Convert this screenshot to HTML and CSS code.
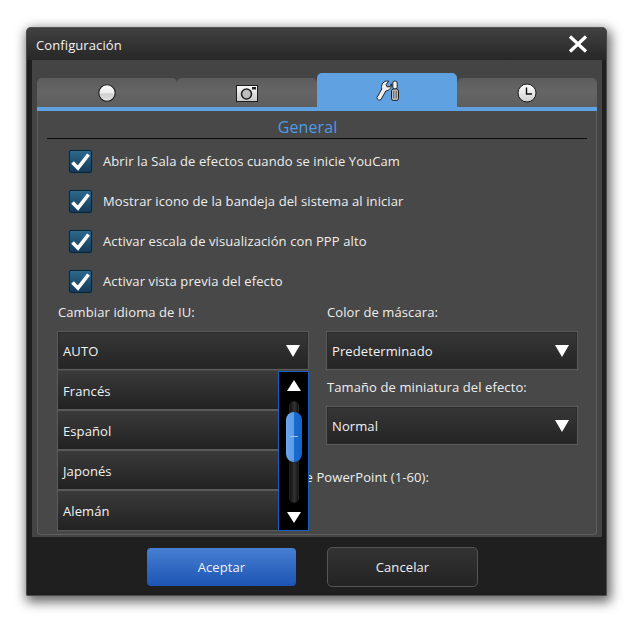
FILE: index.html
```html
<!DOCTYPE html>
<html lang="es">
<head>
<meta charset="utf-8">
<title>Configuración</title>
<link rel="stylesheet" href="styles.css">
</head>
<body>
<div class="window">
  <header class="titlebar">
    <span class="title">Configuración</span>
    <svg class="close" width="20" height="20" viewBox="0 0 20 20"><path d="M2 2.500L18 17.500M18 2.500L2 17.500" stroke="#fff" stroke-width="3.200" fill="none"/></svg>
  </header>
  <main class="panel">
    <nav class="tabs">
      <div class="tab">
        <svg width="20" height="20" viewBox="0 0 20 20"><defs><linearGradient id="g1" x1="0" y1="0" x2="0" y2="1"><stop offset="0" stop-color="#fff"/><stop offset=".5" stop-color="#ececec"/><stop offset=".55" stop-color="#cfcfcf"/><stop offset="1" stop-color="#e4e4e4"/></linearGradient></defs><circle cx="10" cy="10" r="8.200" fill="url(#g1)" stroke="#1c1c1c" stroke-width="1.100"/></svg>
      </div>
      <div class="tab">
        <svg width="24" height="20" viewBox="0 0 24 20"><defs><linearGradient id="g2" x1="0" y1="0" x2="0" y2="1"><stop offset="0" stop-color="#fafafa"/><stop offset="1" stop-color="#c8c8c8"/></linearGradient></defs><rect x="1.500" y="2.500" width="21" height="16" fill="url(#g2)" stroke="#1c1c1c"/><circle cx="11.500" cy="11" r="5" fill="#bdbdbd" stroke="#222" stroke-width="1.600"/><rect x="17" y="4" width="4" height="2.500" fill="#222"/></svg>
      </div>
      <div class="tab tab-active">
        <svg width="23" height="21" viewBox="0 0 23 21"><path d="M1 17.500L5.800 9C4.800 5.500 6.500 1.800 10.500 1L12.800 1.200L10 4.500L11.300 7L14.300 6.500L15.300 3.800C16 7.500 13.500 10.500 9.800 11L5 19.500C3.800 20.800 0.500 19.800 1 17.500Z" fill="#efefef" stroke="#222" stroke-width="1" stroke-linejoin="round"/><rect x="16.800" y="1" width="4.400" height="8" rx="2" fill="#f4f4f4" stroke="#222"/><rect x="15.500" y="9" width="7" height="11.500" rx="2" fill="#bcbcbc" stroke="#222"/><path d="M17.800 11V18.500M20.200 11V18.500" stroke="#555"/></svg>
      </div>
      <div class="tab">
        <svg width="20" height="20" viewBox="0 0 20 20"><defs><linearGradient id="g3" x1="0" y1="0" x2="0" y2="1"><stop offset="0" stop-color="#fff"/><stop offset="1" stop-color="#cfcfcf"/></linearGradient></defs><circle cx="10" cy="10" r="9" fill="url(#g3)" stroke="#1c1c1c"/><path d="M9.500 4.500V11H15" stroke="#111" stroke-width="1.400" fill="none"/></svg>
      </div>
    </nav>
    <section class="content">
      <h1 class="section-title">General</h1>
      <ul class="checks">
        <li class="check-row"><span class="checkbox"><svg width="21" height="19" viewBox="0 0 21 19"><path d="M2.500 10.500L8 16L18.500 2.500" stroke="#fff" stroke-width="3.600" fill="none"/></svg></span>Abrir la Sala de efectos cuando se inicie YouCam</li>
        <li class="check-row"><span class="checkbox"><svg width="21" height="19" viewBox="0 0 21 19"><path d="M2.500 10.500L8 16L18.500 2.500" stroke="#fff" stroke-width="3.600" fill="none"/></svg></span>Mostrar icono de la bandeja del sistema al iniciar</li>
        <li class="check-row"><span class="checkbox"><svg width="21" height="19" viewBox="0 0 21 19"><path d="M2.500 10.500L8 16L18.500 2.500" stroke="#fff" stroke-width="3.600" fill="none"/></svg></span>Activar escala de visualización con PPP alto</li>
        <li class="check-row"><span class="checkbox"><svg width="21" height="19" viewBox="0 0 21 19"><path d="M2.500 10.500L8 16L18.500 2.500" stroke="#fff" stroke-width="3.600" fill="none"/></svg></span>Activar vista previa del efecto</li>
      </ul>
      <div class="columns">
        <div class="column">
          <label class="field-label">Cambiar idioma de IU:</label>
          <div class="select-wrap">
            <div class="select"><span>AUTO</span><i class="arrow-down"></i></div>
            <div class="dropdown">
              <ul class="options">
                <li class="option">Francés</li>
                <li class="option">Español</li>
                <li class="option">Japonés</li>
                <li class="option">Alemán</li>
              </ul>
              <div class="scrollbar">
                <i class="arrow-up"></i>
                <div class="track"><div class="thumb"></div></div>
                <i class="arrow-down"></i>
              </div>
            </div>
          </div>
        </div>
        <div class="column">
          <label class="field-label">Color de máscara:</label>
          <div class="select"><span>Predeterminado</span><i class="arrow-down"></i></div>
          <label class="field-label field-label-second">Tamaño de miniatura del efecto:</label>
          <div class="select"><span>Normal</span><i class="arrow-down"></i></div>
        </div>
      </div>
      <p class="ppt-label">de PowerPoint (1-60):</p>
    </section>
  </main>
  <footer class="footer">
    <button class="btn btn-primary">Aceptar</button>
    <button class="btn btn-secondary">Cancelar</button>
  </footer>
</div>
</body>
</html>
```

FILE: styles.css
```css
* { box-sizing: border-box; }
html, body { margin: 0; padding: 0; }
body {
  width: 634px;
  height: 622px;
  overflow: hidden;
  background: #fff;
  padding: 27px 0 0 26px;
  font-family: "Open Sans", "Noto Sans", sans-serif;
  font-size: 13px;
  letter-spacing: .1px;
  color: #f0f0f0;
}
ul { list-style: none; margin: 0; padding: 0; }
.window {
  width: 581px;
  height: 569px;
  display: flex;
  flex-direction: column;
  background: #1f1f1f;
  border: 1px solid #4a4a4a;
  border-top-color: #555;
  border-radius: 5px 5px 2px 2px;
  box-shadow: 2px 4px 12px 2px rgba(0, 0, 0, .6);
}
.titlebar {
  height: 32px;
  display: flex;
  align-items: center;
  justify-content: space-between;
  padding: 0 18px 0 9px;
  background: linear-gradient(#414141, #272727);
  border-radius: 4px 4px 0 0;
}
.title { font-size: 13px; color: #f2f2f2; padding-top: 2px; }
.close { display: block; }
.panel {
  height: 477px;
  margin: 0 4px 0 5px;
  padding: 13px 5px 2px;
  background: #444;
  display: flex;
  flex-direction: column;
}
.tabs {
  display: flex;
  height: 38px;
  flex: none;
  border-bottom: 4px solid #5fa1e1;
}
.tab {
  width: 140px;
  margin-top: 5px;
  height: 29px;
  display: flex;
  align-items: center;
  justify-content: center;
  background: linear-gradient(#5c5c5c, #656565 45%, #5e5e5e);
  border-radius: 5px 5px 0 0;
}
.tab-active {
  margin-top: 0;
  height: 34px;
  background: #5fa1e1;
}
.content {
  flex: 1;
  min-height: 0;
  background: #484848;
  border: 1px solid #5f5f5f;
  border-top: 0;
  border-radius: 0 0 4px 4px;
  padding: 0 19px;
}
.section-title {
  margin: 0 -10px;
  padding-right: 19px;
  height: 28px;
  line-height: 33px;
  text-align: center;
  font-size: 16px;
  font-weight: 400;
  color: #4d9be6;
  border-bottom: 1px solid #0c0c0c;
}
.checks { padding: 0 0 0 12px; margin-top: 2px; }
.check-row {
  height: 40px;
  display: flex;
  align-items: center;
  gap: 11px;
  color: #eee;
}
.checkbox {
  width: 23px;
  height: 23px;
  display: flex;
  align-items: center;
  justify-content: center;
  flex: none;
  border-radius: 2px;
  border: 1px solid #0f2433;
  background: linear-gradient(#2c6a8e, #163a58);
  box-shadow: 0 0 0 1px #3d4a50;
}
.columns {
  display: grid;
  grid-template-columns: 252px 252px;
  gap: 17px;
}
.column { min-width: 0; }
.field-label {
  display: block;
  height: 30px;
  padding: 2px 0 0 1px;
  line-height: 18px;
  color: #eee;
}
.field-label-second { height: 36px; padding-top: 8px; }
.select-wrap { position: relative; }
.select {
  height: 39px;
  display: flex;
  align-items: center;
  justify-content: space-between;
  padding: 0 8px 0 5px;
  color: #f2f2f2;
  background: linear-gradient(#373737, #242424);
  border: 1px solid #5a5a5a;
  box-shadow: inset 0 0 0 1px #2b2b2b;
}
.arrow-down, .arrow-up {
  display: block;
  width: 0;
  height: 0;
  border-left: 7px solid transparent;
  border-right: 7px solid transparent;
}
.arrow-down { border-top: 12px solid #fff; }
.arrow-up { border-bottom: 11px solid #fff; }
.dropdown {
  position: absolute;
  left: 0;
  right: 0;
  top: 40px;
  height: 160px;
  display: flex;
  z-index: 2;
}
.options { flex: 1; min-width: 0; }
.option {
  height: 40px;
  display: flex;
  align-items: center;
  padding: 2px 0 0 5px;
  color: #f2f2f2;
  background: linear-gradient(#3a3a3a, #222);
  border: 1px solid #5a5a5a;
  border-top-width: 0;
  border-bottom-width: 2px;
  border-right: 0;
}
.option:last-child { border-bottom-width: 1px; padding-top: 1px; }
.scrollbar {
  width: 31px;
  flex: none;
  background: #000;
  border: 1px solid #1a5fc0;
  display: flex;
  flex-direction: column;
  align-items: center;
  padding-top: 8px;
}
.scrollbar .arrow-down { border-top-width: 11px; margin-top: 9px; }
.track {
  position: relative;
  width: 10px;
  height: 102px;
  margin-top: 10px;
  background: linear-gradient(90deg, #111, #333 55%, #161616);
  border: 1px solid #222;
  border-radius: 5px;
}
.thumb {
  position: absolute;
  left: -4px;
  top: 10px;
  width: 16px;
  height: 50px;
  border-radius: 8px;
  background: linear-gradient(90deg, #6aa6e8, #5a9ce6 50%, #1a6bd2 50%, #1763c8);
}
.thumb::after {
  content: "";
  position: absolute;
  left: 4px;
  right: 4px;
  top: 24px;
  height: 1px;
  background: #9cc4ee;
}
.ppt-label {
  margin: 23px 0 0;
  width: 372px;
  text-align: right;
  color: #eee;
  line-height: 18px;
}
.footer {
  flex: 1;
  display: flex;
  align-items: center;
  gap: 31px;
  padding: 2px 0 0 120px;
}
.btn {
  font: inherit;
  letter-spacing: inherit;
  color: #f2f2f2;
  padding: 0;
}
.btn-primary {
  width: 149px;
  height: 38px;
  border: 0;
  border-radius: 4px;
  background: linear-gradient(#477fd2, #1c55b4);
}
.btn-secondary {
  width: 151px;
  height: 40px;
  border: 1px solid #555;
  border-radius: 5px;
  background: linear-gradient(#333, #232323);
}
```
